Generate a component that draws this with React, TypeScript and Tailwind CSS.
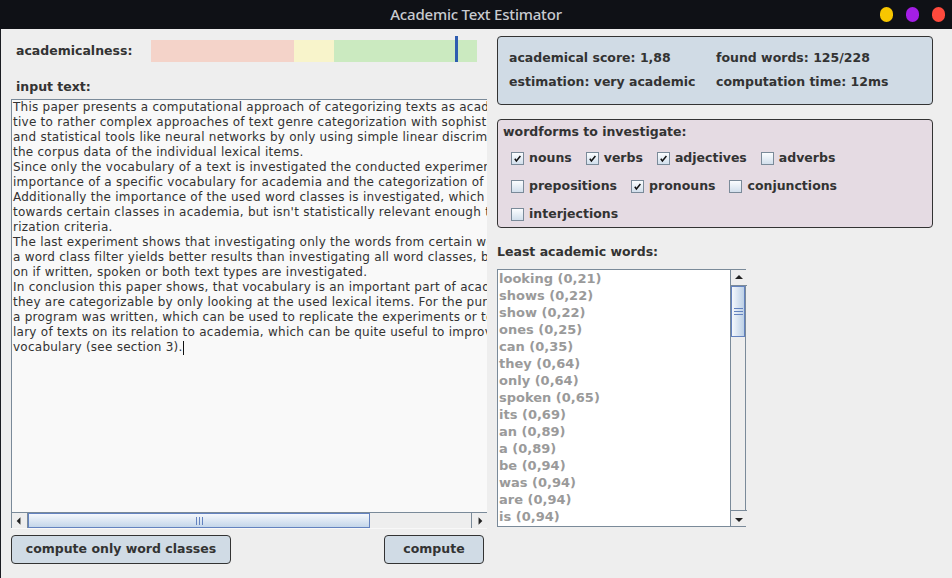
import React from "react";

const lines = [
  "This paper presents a computational approach of categorizing texts as academic or non-academic texts as an alterna-",
  "tive to rather complex approaches of text genre categorization with sophisticated linguistic features",
  "and statistical tools like neural networks by only using simple linear discriminant analysis on",
  "the corpus data of the individual lexical items.",
  "Since only the vocabulary of a text is investigated the conducted experiments show the",
  "importance of a specific vocabulary for academia and the categorization of texts.",
  "Additionally the importance of the used word classes is investigated, which shows a tendency",
  "towards certain classes in academia, but isn't statistically relevant enough to be a catego-",
  "rization criteria.",
  "The last experiment shows that investigating only the words from certain word classes with",
  "a word class filter yields better results than investigating all word classes, based",
  "on if written, spoken or both text types are investigated.",
  "In conclusion this paper shows, that vocabulary is an important part of academic texts and",
  "they are categorizable by only looking at the used lexical items. For the purpose of this paper",
  "a program was written, which can be used to replicate the experiments or to evaluate the vocabu-",
  "lary of texts on its relation to academia, which can be quite useful to improve one's academic",
];

const words = [
  "looking (0,21)",
  "shows (0,22)",
  "show (0,22)",
  "ones (0,25)",
  "can (0,35)",
  "they (0,64)",
  "only (0,64)",
  "spoken (0,65)",
  "its (0,69)",
  "an (0,89)",
  "a (0,89)",
  "be (0,94)",
  "was (0,94)",
  "are (0,94)",
  "is (0,94)",
];

function Check({ checked, label }: { checked?: boolean; label: string }) {
  return (
    <div className="flex items-center gap-[5px] h-[16px]">
      <div className="w-[13px] h-[13px] border border-[#7a8a99] bg-linear-to-b from-[#fbfdff] to-[#d2dfec] flex items-center justify-center">
        {checked && (
          <svg width="9" height="9" viewBox="0 0 9 9">
            <path d="M1.8 4.8 L3.4 7 L7.4 2" stroke="#111" strokeWidth="1.5" fill="none" />
          </svg>
        )}
      </div>
      <span>{label}</span>
    </div>
  );
}

function ArrowBtn({ dir, className }: { dir: "up" | "down" | "left" | "right"; className?: string }) {
  const paths: Record<string, string> = {
    up: "M4 9 L8 5 L12 9 Z",
    down: "M4 7 L8 11 L12 7 Z",
    left: "M9 4 L5 8 L9 12 Z",
    right: "M7 4 L11 8 L7 12 Z",
  };
  return (
    <div className={"w-[16px] h-[16px] bg-[#eeeeee] flex items-center justify-center shrink-0 " + (className || "")}>
      <svg width="16" height="16" viewBox="0 0 16 16">
        <path d={paths[dir]} fill="#222" />
      </svg>
    </div>
  );
}

export default function App() {
  return (
    <div
      className="w-[952px] h-[578px] bg-[#eeeeee] flex flex-col overflow-hidden text-[#333333]"
      style={{ fontFamily: '"DejaVu Sans", sans-serif' }}
    >
      {/* title bar */}
      <div className="h-[29px] bg-[#0f1116] flex items-center justify-center relative shrink-0">
        <span
          className="text-[15px] font-medium text-[#c8cbd0] tracking-[-0.2px]"
          style={{ fontFamily: '"Noto Sans", sans-serif' }}
        >
          Academic Text Estimator
        </span>
        <div className="absolute right-[7px] top-[7px] flex gap-[13px]">
          <div className="w-[13px] h-[15px] rounded-full bg-[#f7c600]" />
          <div className="w-[13px] h-[15px] rounded-full bg-[#a41ee6]" />
          <div className="w-[13px] h-[15px] rounded-full bg-[#ff4a3d]" />
        </div>
      </div>

      {/* content */}
      <div className="flex-1 flex border-l border-l-[#1a1c22] pl-[10px] gap-[10px] text-[12.5px]">
        {/* left column */}
        <div className="w-[476px] flex flex-col">
          <div className="mt-[7px] flex h-[26px]">
            <div className="w-[140px] pl-[5px] mt-[4px] h-[22px] flex items-center font-bold">
              academicalness:
            </div>
            <div className="relative mt-[4px] h-[22px] w-[326px] flex">
              <div className="w-[143px] bg-[#f4d3c9]" />
              <div className="w-[40px] bg-[#f8f4cb]" />
              <div className="flex-1 bg-[#cbeac0]" />
              <div className="absolute left-[304px] top-[-4px] w-[3px] h-[26px] bg-[#2e5db0]" />
            </div>
          </div>
          <div className="mt-[16px] h-[17px] leading-[17px] pl-[5px] font-bold">input text:</div>
          <div className="mt-[4px] w-[476px] flex flex-col">
            <div className="h-[413px] border-t border-l border-[#7a8a99] bg-[#f9f9f9] overflow-hidden pl-[1px] leading-[15px] text-[12px] tracking-[0.25px] whitespace-pre text-[#333]">
              {lines.map((l, i) => (
                <div key={i}>{l}</div>
              ))}
              <div className="flex items-center">
                <span>vocabulary (see section 3).</span>
                <span className="inline-block w-[1px] h-[14px] bg-[#111]" />
              </div>
            </div>
            {/* horizontal scrollbar */}
            <div className="h-[16px] flex border-t border-l border-[#7a8a99] bg-[#eeeeee]">
              <ArrowBtn dir="left" className="border-r border-[#7a8a99] h-[15px] w-[15px]" />
              <div className="w-[342px] h-[15px] border border-[#6382bf] bg-linear-to-b from-[#f5f8fc] to-[#c4d6ea] flex items-center justify-center">
                <div className="flex gap-[2px]">
                  <div className="w-[1px] h-[8px] bg-[#6382bf]" />
                  <div className="w-[1px] h-[8px] bg-[#6382bf]" />
                  <div className="w-[1px] h-[8px] bg-[#6382bf]" />
                </div>
              </div>
              <div className="flex-1" />
              <ArrowBtn dir="right" className="border-l border-[#7a8a99] h-[15px]" />
            </div>
            <div className="h-[1px] bg-[#f8f8f8]" />
          </div>
          <div className="mt-[6px] flex justify-between pr-[3px]">
            <button className="w-[220px] h-[29px] bg-[#d0dbe5] border border-[#333] rounded-[4px] font-bold text-[#333]">
              compute only word classes
            </button>
            <button className="w-[100px] h-[29px] bg-[#d0dbe5] border border-[#333] rounded-[4px] font-bold text-[#333]">
              compute
            </button>
          </div>
        </div>

        {/* right column */}
        <div className="w-[436px] flex flex-col font-bold">
          <div className="mt-[7px] h-[69px] bg-[#d0dbe5] border border-[#333] rounded-[4px] pt-[13px] pl-[11px] flex flex-col gap-[8px]">
            <div className="flex h-[16px] leading-[16px]">
              <div className="w-[207px]">academical score: 1,88</div>
              <div>found words: 125/228</div>
            </div>
            <div className="flex h-[16px] leading-[16px]">
              <div className="w-[207px]">estimation: very academic</div>
              <div>computation time: 12ms</div>
            </div>
          </div>

          <div className="mt-[14px] h-[109px] bg-[#e5dbe3] border border-[#333] rounded-[4px] pt-[4px] flex flex-col">
            <div className="pl-[5px] h-[16px] leading-[16px]">wordforms to investigate:</div>
            <div className="pl-[13px] mt-[10px] flex flex-col gap-[12px]">
              <div className="flex gap-[14px]">
                <Check checked label="nouns" />
                <Check checked label="verbs" />
                <Check checked label="adjectives" />
                <Check label="adverbs" />
              </div>
              <div className="flex gap-[14px]">
                <Check label="prepositions" />
                <Check checked label="pronouns" />
                <Check label="conjunctions" />
              </div>
              <div className="flex gap-[14px]">
                <Check label="interjections" />
              </div>
            </div>
          </div>

          <div className="mt-[16px] h-[16px] leading-[16px]">Least academic words:</div>

          <div className="mt-[9px] w-[249px] h-[258px] border border-[#7a8a99] bg-white flex">
            <div className="flex-1 overflow-hidden pl-[1px] text-[#9a9a9a] text-[13px]">
              {words.map((w) => (
                <div key={w} className="h-[17px] leading-[17px] whitespace-nowrap">
                  {w}
                </div>
              ))}
            </div>
            <div className="w-[15px] border-l border-[#7a8a99] bg-[#eeeeee] flex flex-col">
              <ArrowBtn dir="up" className="w-[14px] border-b border-[#7a8a99]" />
              <div className="h-[51px] border border-[#6382bf] bg-linear-to-r from-[#f5f8fc] to-[#bcd0e6] flex items-center justify-center">
                <div className="flex flex-col gap-[2px]">
                  <div className="w-[9px] h-[1px] bg-[#6382bf]" />
                  <div className="w-[9px] h-[1px] bg-[#6382bf]" />
                  <div className="w-[9px] h-[1px] bg-[#6382bf]" />
                </div>
              </div>
              <div className="flex-1" />
              <ArrowBtn dir="down" className="w-[14px] border-t border-[#7a8a99]" />
            </div>
          </div>
        </div>
      </div>
    </div>
  );
}
